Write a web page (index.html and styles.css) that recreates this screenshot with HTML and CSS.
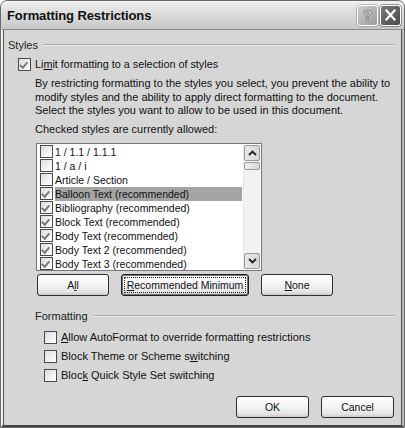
FILE: index.html
```html
<!DOCTYPE html>
<html>
<head>
<meta charset="utf-8">
<link rel="stylesheet" href="styles.css">
</head>
<body>
<div class="window">
  <div class="titlebar">
    <span class="title">Formatting Restrictions</span>
    <div class="tbtns">
      <div class="tbtn help"><svg width="20" height="20" viewBox="0 0 20 20"><text x="10" y="15.5" text-anchor="middle" class="qmark">?</text></svg></div>
      <div class="tbtn close"><svg width="21" height="20" viewBox="0 0 21 20"><path d="M6 5 L15 15 M15 5 L6 15" stroke="#fff" stroke-width="2.4" stroke-linecap="square"/></svg></div>
    </div>
  </div>
  <div class="client">
    <div class="group-head"><span>Styles</span><div class="rule"></div></div>
    <div class="limit-row">
      <span class="cb checked"></span>
      <span>Li<u>m</u>it formatting to a selection of styles</span>
    </div>
    <p class="desc">By restricting formatting to the styles you select, you prevent the ability to modify styles and the ability to apply direct formatting to the document. Select the styles you want to allow to be used in this document.</p>
    <p class="checked-lbl">Checked styles are currently allowed:</p>
    <div class="listbox">
      <div class="items">
        <div class="item"><span class="cb"></span><span>1 / 1.1 / 1.1.1</span></div>
        <div class="item"><span class="cb"></span><span>1 / a / i</span></div>
        <div class="item"><span class="cb"></span><span>Article / Section</span></div>
        <div class="item sel"><span class="cb checked"></span><span class="txt">Balloon Text (recommended)</span></div>
        <div class="item"><span class="cb checked"></span><span>Bibliography (recommended)</span></div>
        <div class="item"><span class="cb checked"></span><span>Block Text (recommended)</span></div>
        <div class="item"><span class="cb checked"></span><span>Body Text (recommended)</span></div>
        <div class="item"><span class="cb checked"></span><span>Body Text 2 (recommended)</span></div>
        <div class="item"><span class="cb checked"></span><span>Body Text 3 (recommended)</span></div>
      </div>
      <div class="scrollbar">
        <div class="sbtn"><svg width="9" height="6" viewBox="0 0 9 6"><path d="M1 5 L4.5 1.5 L8 5" fill="none" stroke="#222" stroke-width="1.8"/></svg></div>
        <div class="thumb"></div>
        <div class="track"></div>
        <div class="sbtn"><svg width="9" height="6" viewBox="0 0 9 6"><path d="M1 1 L4.5 4.5 L8 1" fill="none" stroke="#222" stroke-width="1.8"/></svg></div>
      </div>
    </div>
    <div class="btn-row">
      <div class="btn b-all">A<u>l</u>l</div>
      <div class="btn b-rec"><u>R</u>ecommended Minimum</div>
      <div class="btn b-none"><u>N</u>one</div>
    </div>
    <div class="group-head fmt"><span>Formatting</span><div class="rule"></div></div>
    <div class="opts">
      <div class="opt"><span class="cb"></span><span><u>A</u>llow AutoFormat to override formatting restrictions</span></div>
      <div class="opt"><span class="cb"></span><span>Block Theme or Scheme s<u>w</u>itching</span></div>
      <div class="opt"><span class="cb"></span><span>Bloc<u>k</u> Quick Style Set switching</span></div>
    </div>
    <div class="footer">
      <div class="btn b-ok">OK</div>
      <div class="btn b-cancel">Cancel</div>
    </div>
  </div>
</div>
</body>
</html>
```

FILE: styles.css
```css
html, body {
  margin: 0;
  padding: 0;
  background: #ffffff;
}
body {
  font-family: "Liberation Sans", Arial, sans-serif;
  font-size: 11px;
  color: #111;
}
.window {
  width: 405px;
  height: 428px;
  box-sizing: border-box;
  border: 1px solid #6a6a6a;
  border-radius: 7px 7px 0 0;
  background: #d6d6d6;
  display: flex;
  flex-direction: column;
  overflow: hidden;
}
.titlebar {
  height: 28px;
  flex: none;
  display: flex;
  align-items: center;
  justify-content: space-between;
  padding: 0 3px 0 6px;
  background: linear-gradient(#f2f2f2 0%, #e2e2e2 30%, #d4d4d4 70%, #c6c6c6 100%);
  border-radius: 6px 6px 0 0;
}
.title {
  font-weight: bold;
  font-size: 13px;
  color: #111;
  letter-spacing: -0.1px;
}
.tbtns {
  display: flex;
  gap: 2px;
}
.tbtn {
  width: 21px;
  height: 21px;
  box-sizing: border-box;
  border: 1px solid #fff;
  border-radius: 3px;
  display: flex;
  align-items: center;
  justify-content: center;
}
.help {
  background: linear-gradient(135deg, #cfcfcf, #9a9a9a);
  box-shadow: 0 0 0 0.5px #888;
}
.qmark {
  font-family: "Liberation Sans", Arial, sans-serif;
  font-size: 15px;
  font-weight: bold;
  fill: #f4f4f4;
  stroke: #555;
  stroke-width: 0.6;
}
.close {
  background: linear-gradient(135deg, #7a7a7a, #4a4a4a);
  box-shadow: 0 0 0 0.5px #444;
}
.client {
  flex: 1;
  border-top: 1px solid #8a8a8a;
  border-left: 2px solid #f0f0f0;
  border-right: 2px solid #bbb;
  border-bottom: 2px solid #444;
  box-shadow: inset 1px 0 0 #555, inset -1px 0 0 #555;
  padding: 8px 7px 0 5px;
  display: flex;
  flex-direction: column;
}
.group-head {
  display: flex;
  align-items: center;
  gap: 6px;
  height: 14px;
  color: #222;
}
.group-head .rule {
  flex: 1;
  height: 0;
  border-top: 1px solid #a8a8a8;
  border-bottom: 1px solid #eee;
}
.cb {
  width: 13px;
  height: 13px;
  box-sizing: border-box;
  border: 1px solid #4a4a4a;
  background: linear-gradient(135deg, #dcdcdc 0%, #f2f2f2 60%, #fff 100%);
  flex: none;
  position: relative;
}
.cb.checked::after {
  content: "";
  position: absolute;
  left: 2px;
  top: 0px;
  width: 3px;
  height: 6px;
  border-right: 2px solid #7a7a7a;
  border-bottom: 2px solid #7a7a7a;
  transform: rotate(40deg) translate(1px, 1px);
}
.limit-row {
  display: flex;
  align-items: center;
  gap: 4px;
  margin: 5px 0 0 10px;
  height: 14px;
  font-size: 10.8px;
}
.desc {
  margin: 6px 0 0 27px;
  line-height: 13.5px;
  width: 364px;
}
.checked-lbl {
  margin: 4px 0 0 27px;
  line-height: 14px;
}
.listbox {
  margin: 7px 0 0 28px;
  width: 226px;
  height: 128px;
  box-sizing: border-box;
  border: 1px solid #777;
  background: #fff;
  display: flex;
  padding: 1px;
  font-size: 10.5px;
}
.items {
  flex: 1;
  padding-left: 2px;
  padding-right: 1px;
}
.item {
  display: flex;
  align-items: center;
  height: 14px;
  gap: 2px;
  white-space: nowrap;
}
.item.sel .txt {
  background: #a4a4a4;
  flex: 1;
  height: 14px;
  line-height: 14px;
}
.scrollbar {
  width: 16px;
  display: flex;
  flex-direction: column;
  background: #f2f2f2;
  border-left: 1px solid #e8e8e8;
}
.sbtn {
  height: 16px;
  box-sizing: border-box;
  border: 1px solid #9a9a9a;
  border-radius: 2px;
  background: linear-gradient(90deg, #e8e8e8, #d8d8d8);
  display: flex;
  align-items: center;
  justify-content: center;
}
.thumb {
  height: 8px;
  margin-top: 1px;
  box-sizing: border-box;
  border: 1px solid #9a9a9a;
  border-radius: 2px;
  background: linear-gradient(90deg, #eee, #d6d6d6);
}
.track {
  flex: 1;
}
.btn {
  height: 22px;
  box-sizing: border-box;
  border: 1px solid #2f2f2f;
  border-radius: 3px;
  background: linear-gradient(#ffffff 0%, #f4f4f4 50%, #e4e4e4 85%, #c8c8c8 100%);
  display: flex;
  align-items: center;
  justify-content: center;
  color: #111;
  font-size: 10.5px;
  position: relative;
}
.btn-row {
  display: flex;
  margin: 3px 0 0 29px;
  gap: 12px;
}
.b-all { width: 72px; }
.b-rec { width: 128px; border-color: #1e1e1e; box-shadow: inset 0 0 0 1px #777; }
.b-rec::after {
  content: "";
  position: absolute;
  inset: 2px;
  border: 1px dotted #222;
}
.b-none { width: 72px; }
.fmt {
  margin: 13px 0 0 27px;
}
.opts {
  margin: 8px 0 0 36px;
  display: flex;
  flex-direction: column;
  gap: 6px;
}
.opt {
  display: flex;
  align-items: center;
  gap: 4px;
  height: 13px;
}
.footer {
  margin-top: auto;
  margin-bottom: 7px;
  display: flex;
  justify-content: flex-end;
  gap: 12px;
  padding-right: 1px;
}
.b-ok, .b-cancel { width: 73px; }
```
